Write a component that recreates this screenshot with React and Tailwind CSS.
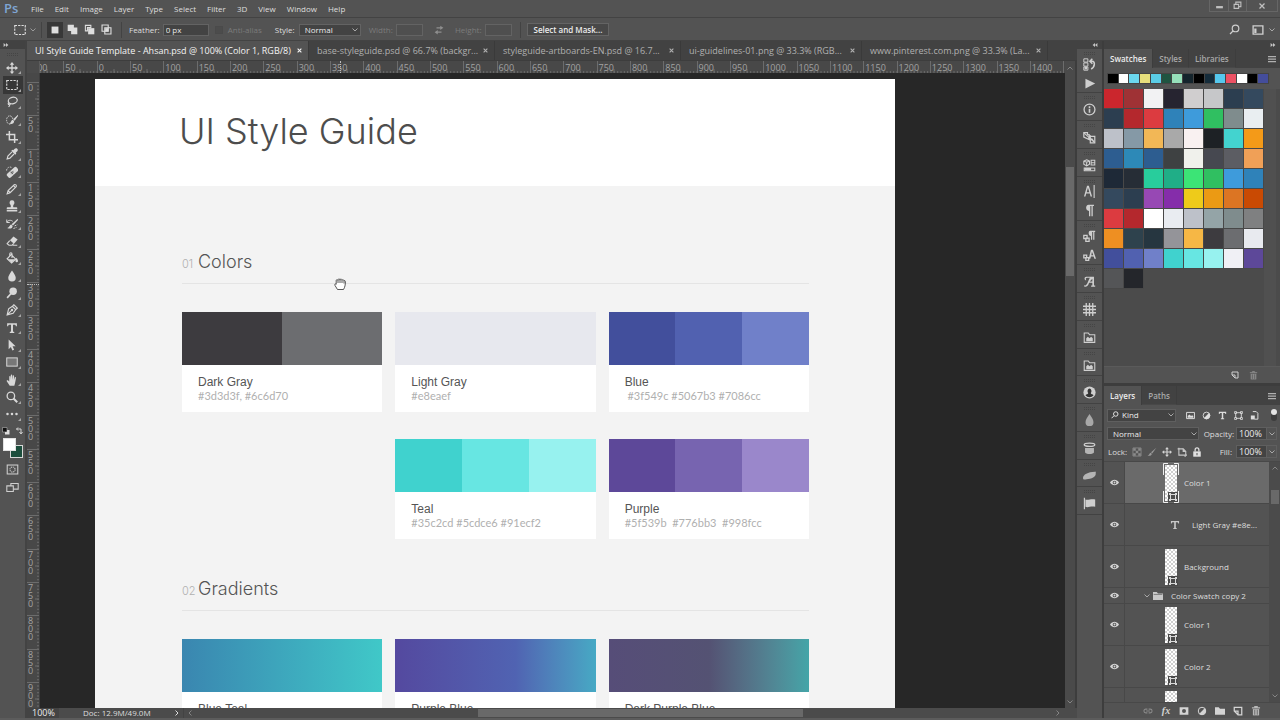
import React, { useEffect, useState } from "react";

const STROKE = { fill: "none", stroke: "currentColor", strokeWidth: 1.3 };

function Icon({ size = 14, children, className = "" }) {
  return (
    <svg
      width={size}
      height={size}
      viewBox="0 0 16 16"
      fill="currentColor"
      aria-hidden="true"
      className={`shrink-0 ${className}`}
    >
      {children}
    </svg>
  );
}

const Chevron = ({ className = "" }) => (
  <Icon size={8} className={className}>
    <path d="M3 5l5 5 5-5" {...STROKE} strokeWidth="2" />
  </Icon>
);

/* ---------- tool glyphs ---------- */

const glyphs = {
  move: <path d="M8 0l3 3.500H8.900v3.600h3.600V5L16 8l-3.500 3V8.900H8.900v3.600H11L8 16l-3-3.500h2.100V8.900H3.500V11L0 8l3.500-3v2.100h3.600V3.500H5z" />,
  marquee: <rect x="1" y="2" width="14" height="12" {...STROKE} strokeWidth="1.500" strokeDasharray="3 1.500" />,
  lasso: (
    <>
      <ellipse cx="9" cy="6" rx="6" ry="4.300" transform="rotate(-14 9 6)" {...STROKE} strokeWidth="1.600" />
      <path d="M4 8.600c-1.600 1-1.400 3 .4 3 1.700 0 1.800-2 .2-2M5.200 11c0 1.600-.6 2.500-1.800 3.500" {...STROKE} strokeWidth="1.500" />
    </>
  ),
  quick: (
    <>
      <ellipse cx="5" cy="8" rx="4.200" ry="5.500" {...STROKE} strokeDasharray="2 1.300" />
      <path d="M16 1L9.500 7l2 2 4.500-6.500zM8.800 7.800c-2.300.8-1.500 4-4.600 4.900 3.300 1.500 6.800.2 6.600-2.900z" />
    </>
  ),
  crop: <path d="M4.500 0v11.500H16M0 4.500h11.500V16" {...STROKE} strokeWidth="2" />,
  dropper: (
    <>
      <path d="M15 1c-1.300-1.300-2.900-.6-3.700.3L9.600 3l-1-.8-1.500 1.500 5.200 5.200 1.500-1.500-.8-1 1.700-1.700C15.600 3.900 16.300 2.300 15 1z" />
      <path d="M8 5.300L2.500 10.800 1.500 14.500l3.700-1L10.700 8" {...STROKE} strokeWidth="1.500" />
    </>
  ),
  heal: (
    <>
      <path d="M.8 6a4.500 4.500 0 0 1 7-3.800" {...STROKE} strokeDasharray="2 1.300" />
      <rect x="0" y="5.500" width="17" height="7" rx="2.500" transform="rotate(-42 8 8.500)" />
      <path d="M6 9l4-2M7 11l3-3M6.500 7.500l3 3.500" stroke="#535353" strokeWidth="1" />
    </>
  ),
  pencil: <path d="M1.500 14.500l1.300-4.500L11 2.300c1.500-1 3.600 1 2.600 2.600L5.500 13zM2.800 10l2.700 3M10 3.500l2.700 2.700" {...STROKE} strokeWidth="1.500" />,
  stamp: <path d="M8 .5A3.200 3.200 0 0 0 5.700 6c.9 1.200.9 2.500.5 3.500H2c-.6 0-1 .4-1 1V12.300h14v-1.800c0-.6-.4-1-1-1H9.800c-.4-1-.4-2.300.5-3.500A3.200 3.200 0 0 0 8 .5zM1 13.300h14v1.900H1z" />,
  history: (
    <>
      <path d="M1 5.500C3 2.500 7 2.500 9 4.500M1 2v4h4" {...STROKE} />
      <path d="M15.500 1L7.500 8.300 9.300 10 16 2.500zM6.900 8.500c-2.300.8-2 3.900-5.400 4.700 3.300 1.900 7.600.6 7.300-2.600z" />
      <path d="M10 14l4-1.500M11.500 10.500L15 9" {...STROKE} strokeDasharray="2 1" />
    </>
  ),
  eraser: (
    <>
      <path d="M10 2l5.500 4-4.800 5.500-5.500-4.500z" />
      <path d="M5 7.500l-3.500 4 2.500 2.200h4l2.300-2.500M9 13.700h6" {...STROKE} strokeWidth="1.500" />
    </>
  ),
  bucket: (
    <>
      <path d="M7 3.500l6 6-5.500 5L1.500 9zM5 6V2.500c0-2 3-2 3 0V8" {...STROKE} strokeWidth="1.500" />
      <path d="M3 9.500h9.500l-5 4.500zM14 7.500c1.500 2 2 3.500 2 4.500a1.700 1.700 0 0 1-3.400 0c0-1 .4-2.500 1.400-4.500z" />
    </>
  ),
  drop: <path d="M8 .5c2.500 4 5 6.800 5 9.700a5 5 0 0 1-10 0C3 7.300 5.500 4.500 8 .5z" />,
  dodge: (
    <>
      <circle cx="9.500" cy="5.500" r="5" />
      <path d="M6.500 9L1.500 14.500" {...STROKE} strokeWidth="2.200" />
    </>
  ),
  pen: (
    <>
      <path d="M1.500 14.500l2-8 5-3.500 4.500 4.500L9.500 12.500zM1.500 14.500l6-6M9 2.500l1.500-1.500 4.500 4.500-1.500 1.500" {...STROKE} strokeWidth="1.500" />
      <circle cx="8" cy="8" r="1.600" />
    </>
  ),
  type: <path d="M1.500 1.500h13V5.500h-1.300c-.3-1.600-.8-2-2-2H9.300v8.500c0 .9.5 1.200 1.700 1.200v1.300H5v-1.300c1.200 0 1.700-.3 1.700-1.200V3.500H4.800c-1.200 0-1.700.4-2 2H1.500z" />,
  arrow: <path d="M3.500 0.500v13l3-2.800 2 4.600 2.300-1-2-4.500h4z" />,
  rect: <rect x="1" y="2.500" width="14" height="11" fill="#777" stroke="currentColor" strokeWidth="1.300" />,
  hand: <path d="M5 15.500L1 9.700c-.5-1.200 1-1.900 1.900-1L4.300 10V3.500c0-1.300 1.700-1.300 1.800 0l.3 4V1.800c0-1.300 1.800-1.300 1.900 0l.2 5.700.6-5c.1-1.200 1.800-1 1.700.2l-.2 5.300 1-3.300c.3-1 1.900-.7 1.700.4-.4 3-.6 4.700-1.300 7.200l-.9 3.200z" />,
  zoom: (
    <>
      <circle cx="6.500" cy="6.500" r="5" {...STROKE} strokeWidth="1.700" />
      <path d="M10 10l5 5" {...STROKE} strokeWidth="2.500" />
    </>
  ),
  dots: (
    <>
      <circle cx="2" cy="8" r="1.700" />
      <circle cx="8" cy="8" r="1.700" />
      <circle cx="14" cy="8" r="1.700" />
    </>
  ),
};

const tools = [
  ["Move", "move"],
  ["Rectangular Marquee", "marquee"],
  ["Lasso", "lasso"],
  ["Quick Selection", "quick"],
  ["Crop", "crop"],
  ["Eyedropper", "dropper"],
  ["Healing Brush", "heal"],
  ["Pencil", "pencil"],
  ["Clone Stamp", "stamp"],
  ["History Brush", "history"],
  ["Eraser", "eraser"],
  ["Paint Bucket", "bucket"],
  ["Blur", "drop"],
  ["Dodge", "dodge"],
  ["Pen", "pen"],
  ["Type", "type"],
  ["Path Selection", "arrow"],
  ["Rectangle", "rect"],
  ["Hand", "hand"],
  ["Zoom", "zoom"],
  ["Edit Toolbar", "dots"],
];

function Grip() {
  return (
    <svg width="12" height="3" viewBox="0 0 12 3" aria-hidden="true" className="shrink-0 text-[#454545]">
      <path d="M0 .5h12M0 2.500h12" stroke="currentColor" strokeDasharray="1 1" />
    </svg>
  );
}

function Collapse({ left = false }) {
  return (
    <svg width="6" height="4" viewBox="0 0 6 5" fill="#c4c4c4" aria-hidden="true">
      {left ? <path d="M3 0v5L0 2.500zM6 0v5L3 2.500z" /> : <path d="M0 0v5l3-2.500zM3 0v5l3-2.500z" />}
    </svg>
  );
}

/* ---------- menu and options bars ---------- */

const menus = ["File", "Edit", "Image", "Layer", "Type", "Select", "Filter", "3D", "View", "Window", "Help"];

function MenuBar() {
  return (
    <header className="flex h-[18px] shrink-0 items-stretch border-b border-[#434343] pl-1">
      <span className="flex w-[22px] items-center text-[13px] leading-none font-semibold text-[#7fa6d3]">Ps</span>
      <nav className="flex items-center gap-px" aria-label="Main menu">
        {menus.map((m) => (
          <button key={m} type="button" className="px-[5px]">
            {m}
          </button>
        ))}
      </nav>
      <div className="mr-[2px] ml-auto flex h-3 border border-t-0 border-[#666] text-[#c0c0c0]">
        <button type="button" aria-label="Minimize" className="flex w-[19px] items-center justify-center border-r border-[#666]">
          <Icon size={9}>
            <path d="M2 9h12v4H2z" />
          </Icon>
        </button>
        <button type="button" aria-label="Restore" className="flex w-[18px] items-center justify-center border-r border-[#666]">
          <Icon size={9}>
            <path d="M5 5V2h9v8h-3M2 6h8v7H2z" {...STROKE} strokeWidth="2" />
          </Icon>
        </button>
        <button type="button" aria-label="Close" className="flex w-[30px] items-center justify-center">
          <Icon size={8}>
            <path d="M3 3l10 10M13 3L3 13" {...STROKE} strokeWidth="2.500" />
          </Icon>
        </button>
      </div>
    </header>
  );
}

const Divider = ({ className = "" }) => <span className={`h-4 w-px shrink-0 bg-[#434343] ${className}`} />;

function SizeField({ label }) {
  return (
    <label className="flex items-center gap-[3px] text-[#7b7b7b]">
      {label}
      <input disabled className="h-3 w-[27px] border border-[#636363] bg-[#4f4f4f]" />
    </label>
  );
}

function OptionsBar() {
  return (
    <div className="flex h-[23px] shrink-0 items-center border-b border-[#434343] pt-px">
      <button type="button" aria-label="Tool preset" className="ml-[14px] flex items-center gap-[3px]">
        <Icon size={12}>{glyphs.marquee}</Icon>
        <Chevron className="text-[#9a9a9a]" />
      </button>
      <Divider className="ml-1" />
      <div className="ml-[5px] flex items-center">
        <button type="button" aria-label="New selection" className="flex h-4 w-4 items-center justify-center bg-[#383838]">
          <Icon size={10}>
            <path d="M2.500 2.500h11v11h-11z" />
          </Icon>
        </button>
        <button type="button" aria-label="Add to selection" className="flex h-4 w-[18px] items-center justify-center">
          <Icon size={11}>
            <path d="M1 1h9v4h5v10H6v-5H1z" />
          </Icon>
        </button>
        <button type="button" aria-label="Subtract from selection" className="flex h-4 w-4 items-center justify-center">
          <Icon size={11}>
            <path d="M2 2h8v3H5v5H2z" {...STROKE} strokeWidth="1.500" />
            <path d="M6 6h9v9H6z" />
          </Icon>
        </button>
        <button type="button" aria-label="Intersect with selection" className="flex h-4 w-[18px] items-center justify-center">
          <Icon size={11}>
            <path d="M1.500 1.500h9v9h-9zM5.500 5.500h9v9h-9z" {...STROKE} strokeWidth="1.600" />
            <path d="M6 6h5v5H6z" />
          </Icon>
        </button>
      </div>
      <Divider className="ml-[6px]" />
      <label className="ml-[7px] flex items-center gap-[3px]">
        Feather:
        <input defaultValue="0 px" className="h-3 w-[46px] border border-[#636363] bg-[#434343] px-[2px] text-[#e8e8e8]" />
      </label>
      <label className="ml-[6px] flex items-center gap-[5px] text-[#7b7b7b]">
        <input type="checkbox" disabled className="h-2 w-2 appearance-none border border-[#4a4a4a] bg-[#4c4c4c]" />
        Anti-alias
      </label>
      <label className="ml-[13px] flex items-center gap-1">
        Style:
        <span className="grid items-center">
          <select className="col-start-1 row-start-1 h-3 w-[62px] appearance-none border border-[#636363] bg-[#434343] px-[5px] leading-[10px] text-[#ececec]">
            <option>Normal</option>
          </select>
          <Chevron className="pointer-events-none col-start-1 row-start-1 mr-[2px] justify-self-end text-[#a8a8a8]" />
        </span>
      </label>
      <div className="ml-2 flex items-center">
        <SizeField label="Width:" />
        <button type="button" aria-label="Swap width and height" className="mx-[11px] text-[#8f8f8f]">
          <Icon size={10}>
            <path d="M10 1l5 3.500L10 8V5.500H4v-2h6zM6 8L1 11.500 6 15v-2.500h6v-2H6z" />
          </Icon>
        </button>
        <SizeField label="Height:" />
      </div>
      <Divider className="ml-2" />
      <button type="button" className="ml-[6px] h-[13px] border border-[#646464] bg-[#484848] px-[6px] leading-none font-semibold text-[#ececec]">
        Select and Mask...
      </button>
      <div className="mr-1 ml-auto flex items-center text-[#cfcfcf]">
        <button type="button" aria-label="Search">
          <Icon size={11}>
            <circle cx="9.500" cy="6.500" r="4.800" {...STROKE} strokeWidth="1.700" />
            <path d="M6 10l-4.500 4.500" {...STROKE} strokeWidth="2" />
          </Icon>
        </button>
        <button type="button" aria-label="Workspace" className="ml-3 flex items-center gap-1">
          <Icon size={12}>
            <path d="M1.500 2.500h13v11h-13z" {...STROKE} strokeWidth="1.800" />
            <path d="M3 6h3v6H3z" />
          </Icon>
          <Chevron className="text-[#a8a8a8]" />
        </button>
      </div>
    </div>
  );
}

/* ---------- toolbar ---------- */

function Toolbar() {
  return (
    <aside className="flex w-[27px] shrink-0 flex-col border-r-2 border-[#434343]" aria-label="Tools">
      <div className="flex h-2 shrink-0 items-center bg-[#424242] pl-[3px]">
        <Collapse />
      </div>
      <div className="flex h-[10px] shrink-0 items-center justify-center">
        <Grip />
      </div>
      <div className="flex h-[364px] shrink-0 flex-col">
        {tools.map(([name, glyph]) => (
          <div key={name} className="flex min-h-0 flex-1 pr-[2px] pl-[3px]">
            <button
              type="button"
              aria-label={name}
              className={`flex w-full items-center justify-center text-[#d8d8d8] ${glyph === "marquee" ? "bg-[#373737]" : ""}`}
            >
              <Icon size={12}>{glyphs[glyph]}</Icon>
              <svg width="3" height="3" viewBox="0 0 3 3" className="mb-[2px] self-end text-[#a5a5a5]" aria-hidden="true">
                <path d="M3 0v3H0z" fill="currentColor" />
              </svg>
            </button>
          </div>
        ))}
      </div>
      <div className="flex h-[15px] shrink-0 items-center justify-between px-[2px]">
        <Icon size={8}>
          <path d="M6 6h9v9H6z" fill="#ddd" />
          <path d="M1 1h9v9H1z" fill="#111" stroke="#ccc" />
        </Icon>
        <Icon size={8} className="text-[#d4d4d4]">
          <path d="M3 4h9v9M6 1L3 4l3 3M9 10l3 4 3-4" {...STROKE} strokeWidth="2" />
        </Icon>
      </div>
      <div className="grid h-5 w-5 shrink-0 grid-cols-3 grid-rows-3 pl-[1px]">
        <button type="button" aria-label="Background color" className="col-span-2 col-start-2 row-span-2 row-start-2 -mr-[3px] ml-[3px] border border-[#d8d8d8] bg-[#1c4e3d]" />
        <button type="button" aria-label="Foreground color" className="col-span-2 col-start-1 row-span-2 row-start-1 -mr-[2px] ml-[2px] border border-[#e2e2e2] bg-white" />
      </div>
      <button type="button" aria-label="Quick mask" className="mt-[2px] flex h-[18px] shrink-0 items-center justify-center text-[#cfcfcf]">
        <Icon size={13}>
          <rect x="1.500" y="2.500" width="13" height="11" {...STROKE} />
          <circle cx="8" cy="8" r="3.200" {...STROKE} strokeDasharray="1.500 1" />
        </Icon>
      </button>
      <button type="button" aria-label="Screen mode" className="flex h-[18px] shrink-0 items-center justify-center text-[#cfcfcf]">
        <Icon size={13}>
          <path d="M6 3h9v7H6z" {...STROKE} />
          <path d="M1 6h8v7H1z" fill="#535353" stroke="currentColor" strokeWidth="1.300" />
        </Icon>
      </button>
    </aside>
  );
}

/* ---------- document ---------- */

const tabs = [
  ["UI Style Guide Template - Ahsan.psd @ 100% (Color 1, RGB/8)", "w-[282px]"],
  ["base-styleguide.psd @ 66.7% (backgr...", "w-[186px]"],
  ["styleguide-artboards-EN.psd @ 16.7...", "w-[186px]"],
  ["ui-guidelines-01.png @ 33.3% (RGB...", "w-[181px]"],
  ["www.pinterest.com.png @ 33.3% (La...", "w-[186px]"],
];

function DocumentTabs() {
  return (
    <div className="flex h-5 shrink-0 border-b border-[#3d3d3d] bg-[#424242]" role="tablist">
      {tabs.map(([name, width], i) => (
        <div
          key={name}
          className={`flex shrink-0 items-center justify-between border-r border-[#3a3a3a] pr-[6px] pl-2 text-[9px] font-medium whitespace-nowrap ${width} ${
            i === 0 ? "bg-[#535353] text-[#f4f4f4]" : "text-[#b0b0b0]"
          }`}
        >
          <button type="button" role="tab" aria-selected={i === 0}>
            {name}
          </button>
          <button type="button" aria-label={`Close ${name}`}>
            <Icon size={5}>
              <path d="M2 2l12 12M14 2L2 14" {...STROKE} strokeWidth="3.500" />
            </Icon>
          </button>
        </div>
      ))}
    </div>
  );
}

const STEP = 100 / 3;

function useWindowSize() {
  const [size, setSize] = useState([window.innerWidth, window.innerHeight]);
  useEffect(() => {
    const update = () => setSize([window.innerWidth, window.innerHeight]);
    window.addEventListener("resize", update);
    return () => window.removeEventListener("resize", update);
  }, []);
  return size;
}

function RulerTop() {
  const [width] = useWindowSize();
  const count = Math.ceil((width - 245) / STEP);
  return (
    <div className="-ml-[10px] flex h-3 text-[9px] leading-[14px] text-[#a3a3a3]">
      {Array.from({ length: count }, (_, i) => (
        <div key={i} className="grid h-3 shrink-0" style={{ width: STEP }}>
          <svg width="34" height="12" className="col-start-1 row-start-1 text-[#6c6c6c]" aria-hidden="true">
            <path d="M.5 0V12" stroke="currentColor" />
            <path d="M3.500 11H34" stroke="currentColor" strokeWidth="2" strokeDasharray="1 2.333" />
            <path d="M17 8V12" stroke="currentColor" />
          </svg>
          {i < count - 1 && <span className="col-start-1 row-start-1 pl-[2px]">{Math.abs((i - 2) * 50)}</span>}
        </div>
      ))}
    </div>
  );
}

function RulerSide() {
  const [, height] = useWindowSize();
  const count = Math.ceil((height - 92) / STEP);
  return (
    <div className="mt-[9px] w-3 text-[9px] text-[#a3a3a3]">
      {Array.from({ length: count }, (_, i) => (
        <div key={i} className="grid" style={{ height: STEP }}>
          <svg width="12" height="34" className="col-start-1 row-start-1 text-[#6c6c6c]" aria-hidden="true">
            <path d="M0 .5H12" stroke="currentColor" />
            <path d="M11 3.500V34" stroke="currentColor" strokeWidth="2" strokeDasharray="1 2.333" />
            <path d="M8 17H12" stroke="currentColor" />
          </svg>
          <span className="col-start-1 row-start-1 ml-px w-[6px] pt-[2px] leading-2 break-all">{i * 50}</span>
        </div>
      ))}
    </div>
  );
}

const colorCards = [
  { name: "Dark Gray", hex: "#3d3d3f, #6c6d70", fills: ["bg-[#3d3b3f]", "bg-[#6c6d70]"] },
  { name: "Light Gray", hex: "#e8eaef", fills: ["bg-[#e7e8ee]"] },
  { name: "Blue", hex: " #3f549c #5067b3 #7086cc", fills: ["bg-[#424f9c]", "bg-[#5161b0]", "bg-[#7080c9]"] },
  { name: "Teal", hex: "#35c2cd #5cdce6 #91ecf2", fills: ["bg-[#40d2ce]", "bg-[#67e6e2]", "bg-[#97f2ef]"], place: "col-start-2" },
  { name: "Purple", hex: "#5f539b  #776bb3  #998fcc", fills: ["bg-[#5d4899]", "bg-[#7764b0]", "bg-[#9a87cb]"] },
];

const gradientCards = [
  { name: "Blue Teal", fills: ["bg-linear-to-r from-[#3a86b0] to-[#40c8c8]"] },
  { name: "Purple Blue", fills: ["bg-linear-to-r from-[#54499f] via-[#5063b2] via-60% to-[#46a9c4]"] },
  { name: "Dark Purple Blue", fills: ["bg-linear-to-r from-[#564d78] via-[#545273] via-50% to-[#44a5a8]"] },
];

function Card({ name, hex, fills, place = "" }) {
  return (
    <article className={`flex h-[100px] flex-col bg-white ${place}`}>
      <div className="flex h-[53px] shrink-0">
        {fills.map((f) => (
          <div key={f} className={`flex-1 ${f}`} />
        ))}
      </div>
      <h3 className="mt-[9px] ml-4 font-['Liberation_Sans',sans-serif] text-[12px] leading-4 text-[#555]">{name}</h3>
      {hex && <p className="ml-4 font-['Lato',sans-serif] text-[11px] leading-[11px] whitespace-pre text-[#b0b0b0]">{hex}</p>}
    </article>
  );
}

function Section({ number, title, cards, className = "" }) {
  return (
    <section className={`mr-[86px] ml-[87px] ${className}`}>
      <div className="flex h-[35px] items-baseline border-b border-[#e4e4e4] font-['Inter',sans-serif]">
        <span className="w-4 text-[11px] leading-[26px] font-light text-[#b0b0b0]">{number}</span>
        <h2 className="text-[18px] leading-[26px] font-light text-[#555]">{title}</h2>
      </div>
      <div className="mt-7 grid grid-cols-3 gap-x-[13px] gap-y-[27px]">
        {cards.map((c) => (
          <Card key={c.name} {...c} />
        ))}
      </div>
    </section>
  );
}

function StyleGuide() {
  return (
    <main className="mt-[6px] ml-[55px] w-[800px] shrink-0 bg-[#f3f3f3]">
      <div className="flex h-[107px] items-center bg-white pb-[3px] pl-[84px]">
        <h1 className="font-['Inter',sans-serif] text-[36px] leading-none font-light text-[#4d4d4d]">UI Style Guide</h1>
      </div>
      <Section number="01" title="Colors" cards={colorCards} className="pt-[63px]" />
      <Section number="02" title="Gradients" cards={gradientCards} className="pt-[37px]" />
    </main>
  );
}

function GrabCursor() {
  return (
    <svg width="12" height="13" viewBox="0 0 12 13" aria-hidden="true" className="absolute top-[204px] left-[294px]">
      <path
        d="M3.500 12.500L1 8.500c-.8-1.200.3-2 1.200-1.200V3.500c0-1 1.500-1.200 1.800 0 0-2 1.800-2.200 2-.4.2-1.600 1.900-1.300 2 .3.300-1.200 1.800-.8 2 .4.800-.5 1.500 0 1.400 1C11.300 8 11 10 9.500 12.500zM4 3.500V6M6 3v3M8 3.500V6M10 4v2.500"
        fill="#fff"
        stroke="#444"
        strokeWidth="0.900"
      />
    </svg>
  );
}

function DocumentArea() {
  return (
    <div className="flex min-w-0 flex-1 flex-col">
      <DocumentTabs />
      <div className="grid min-h-0 flex-1 grid-cols-[13px_1fr_12px] grid-rows-[12px_1fr]">
        <div className="border-r border-[#5c5c5c] bg-[#4b4b4b]" />
        <div className="relative min-w-0 overflow-hidden bg-[#484848]">
          <RulerTop />
          <span className="absolute top-0 left-[300px] h-3 border-l border-dotted border-[#bdbdbd]" />
        </div>
        <div className="row-span-2 flex flex-col items-center border-r-2 border-[#3d3d3d] bg-[#4a4a4a] text-[#858585]">
          <Chevron className="mt-[3px] rotate-180" />
          <div className="mt-[95px] mb-auto h-[109px] w-2 bg-[#696969]" />
          <Chevron className="mb-[2px]" />
        </div>
        <div className="relative min-h-0 overflow-hidden border-r border-[#3d3d3d] bg-[#484848]">
          <RulerSide />
          <span className="absolute top-[211px] left-0 w-3 border-t border-dotted border-[#bdbdbd]" />
        </div>
        <div className="relative min-h-0 min-w-0 overflow-hidden bg-[#272727]">
          <StyleGuide />
          <GrabCursor />
        </div>
      </div>
      <footer className="flex h-[10px] shrink-0 items-center bg-[#4b4b4b]">
        <span className="flex h-full w-8 items-center bg-[#434343] pl-[5px] text-[9px] text-[#ececec]">100%</span>
        <span className="ml-6">Doc: 12.9M/49.0M</span>
        <button type="button" aria-label="Status options" className="ml-[22px]">
          <Chevron className="-rotate-90" />
        </button>
        <Divider className="ml-[2px]" />
        <Chevron className="ml-[2px] rotate-90 text-[#858585]" />
        <div className="grid flex-1 grid-cols-[285fr_325fr_251fr]">
          <div className="col-start-2 h-2 bg-[#696969]" />
        </div>
        <Chevron className="mr-[15px] -rotate-90 text-[#858585]" />
      </footer>
    </div>
  );
}

/* ---------- collapsed panel dock ---------- */

const folder = (
  <>
    <path d="M1.500 2.500h5l1.500 2h6.500v9.500h-13z" {...STROKE} />
    <path d="M4 12.500V9l2-2 2 2 2-2 2 2v3.500z" />
  </>
);

const dock = [
  [
    ["History", <><path d="M1 1h5v4H1zM1 6h5v4H1zM1 11h5v4H1z" fill="none" stroke="currentColor" strokeWidth="1.200" /><path d="M2 11h3v3H2z" /><path d="M9 4h2.500c3.500 0 3.500 7-1.500 9.500M11.500 1L8.500 4l3 3" {...STROKE} strokeWidth="1.900" /></>],
    ["Actions", <path d="M3 2l12 6-12 6z" />],
  ],
  [["Info", <><circle cx="8" cy="8" r="6.700" {...STROKE} strokeWidth="1.600" /><path d="M7 7h2v5H7zM7 4h2v2H7z" /></>]],
  [["Clone Source", <><path d="M1 2h4.500v2l2 1v5.500L1 7.500zM9 6.500h5.500v8H9z" {...STROKE} strokeWidth="1.500" /><path d="M1.500 2.500L14 14M7 4l3 3M10.500 9l3 4" {...STROKE} /></>]],
  [["Properties", <><path d="M4.500 1l3.500 1.500v4L4.500 8.500 1 6.500v-4zM4.500 4v4M1 2.500L4.500 4 8 2.500M10 1.500h4.500v6H10zM10 4.500h4.500M1.500 11h13v3.500h-13z" {...STROKE} /><path d="M2 11h8v3H2z" /></>]],
  [
    ["Character", <path d="M5 1h2.200l4 13H9.300l-1-3.500H4L3 14H1.200zM6.100 3.500L4.500 8.900h3.300zM13 0h1.400v16H13z" />],
    ["Paragraph", <path d="M7 1h6.500v1.600H12V15h-1.600V2.600H9V15H7.400V8.500C3 8.500 2.500 1 7 1z" />],
  ],
  [
    ["Paragraph Styles", <><path d="M9 1h6v1.500h-1V12h-1.500V2.500h-1.200V12H9.800V7.500C6.500 7.500 6 1 9 1z" /><path d="M1 6.500h4v4H1zM3.500 10h4v4h-4z" {...STROKE} strokeWidth="1.600" /></>],
    ["Character Styles", <><path d="M9.800 1h2.400L16 12h-2l-.9-2.800H9.800L9 12H7zM11 3.500L10.200 7.700h2.500z" /><path d="M1 7.500h3.500V11H1zM3.500 10.500H7V14H3.500z" {...STROKE} strokeWidth="1.600" /></>],
  ],
  [["Glyphs", <path d="M4 2h9.500v11h1.500v1.500h-5V13h1.500V9.500h-4C6.500 13 4.500 15 2 14.500c-1-.3-1-2 .3-1.700C5 13.500 6.500 7 8.500 3.500H5C3.500 3.500 3 5 4 6.500 1 6 1.500 2 4 2zm7.500 2.500L8.300 8h3.200z" />]],
  [["Grid", <path d="M4 0v16M8 0v16M12 0v16M0 4h16M0 8h16M0 12h16" {...STROKE} strokeWidth="1.600" />]],
  [["Library A", folder]],
  [["Library B", folder]],
  [["Profile", <><circle cx="8" cy="8" r="7.500" /><path d="M8 3a2.700 3.300 0 0 1 1.500 5.700c.2 1.300 2.500 1.500 3.500 2.800A6.500 6.500 0 0 1 3 11.500c1-1.300 3.300-1.500 3.500-2.800A2.700 3.300 0 0 1 8 3z" fill="#333" /></>]],
  [["Drop", <path d="M8 0c2.500 4 4.900 6.800 4.900 10a4.900 4.900 0 0 1-9.800 0C3.100 6.800 5.500 4 8 0z" fill="#a8a8a8" />]],
  [["Container", <><ellipse cx="8" cy="3.500" rx="6.500" ry="2" {...STROKE} strokeWidth="1.600" /><path d="M2.500 7.500h11v5c0 3-11 3-11 0z" fill="#b4b4b4" /></>]],
  [["Shape", <path d="M0 11c0-4 7-8 16-7.500-1 2 1 4.500-3 6.500-3 2-6 2-8.500 2.500S0 13.500 0 11z" fill="#b4b4b4" />]],
  [["Flag", <path d="M1 1h1.500v14H1zM3 3c3 1.500 6-1 12 0v9c-6-1-9 1.500-12 0z" />]],
];

function Dock() {
  return (
    <aside className="flex w-[27px] shrink-0 flex-col border-r-2 border-[#3d3d3d]" aria-label="Collapsed panels">
      <div className="flex h-2 shrink-0 items-center justify-end bg-[#424242] pr-1">
        <Collapse left />
      </div>
      <div className="flex h-[466px] shrink-0 flex-col">
        {dock.map((group) => (
          <div
            key={group[0][0]}
            className={`flex min-h-0 flex-col items-center border-b border-[#424242] pt-[3px] ${
              group.length === 2 ? "flex-[46_1_0px]" : "flex-[27_1_0px]"
            }`}
          >
            <Grip />
            {group.map(([name, glyph]) => (
              <button key={name} type="button" aria-label={name} className="flex w-full flex-1 items-center justify-center text-[#cfcfcf]">
                <Icon size={13}>{glyph}</Icon>
              </button>
            ))}
          </div>
        ))}
      </div>
    </aside>
  );
}

/* ---------- right panels ---------- */

function PanelTabs({ names }) {
  return (
    <div className="flex h-[19px] shrink-0 bg-[#424242] font-semibold" role="tablist">
      {names.map((n, i) => (
        <button
          key={n}
          type="button"
          role="tab"
          aria-selected={i === 0}
          className={`border-r border-[#3d3d3d] px-[6px] ${i === 0 ? "bg-[#535353] text-[#ececec]" : "border-b border-b-[#484848] pt-px text-[#a8a8a8]"}`}
        >
          {n}
        </button>
      ))}
      <button type="button" aria-label="Panel menu" className="ml-auto pr-1 text-[#b0b0b0]">
        <Icon size={8}>
          <path d="M0 2h16v2.500H0zM0 7h16v2.500H0zM0 12h16v2.500H0z" />
        </Icon>
      </button>
    </div>
  );
}

const recent = [
  "bg-black", "bg-white", "bg-[#6bd8ef]", "bg-[#e6df7c]", "bg-[#5acde6]", "bg-[#1f5441]", "bg-[#96e0ba]", "bg-[#14242c]",
  "bg-black", "bg-[#152c3b]", "bg-[#55c8ee]", "bg-[#ec5164]", "bg-white", "bg-black", "bg-[#444d9b]",
];

const swatches = [
  "bg-[#cb262d]", "bg-[#9f3235]", "bg-[#f2f2f3]", "bg-[#262430]", "bg-[#d0cecf]", "bg-[#c6c7c9]", "bg-[#2c3e50]", "bg-[#34495e]",
  "bg-[#2c3e50]", "bg-[#b4282d]", "bg-[#dc3b40]", "bg-[#2f82b9]", "bg-[#3e9bdb]", "bg-[#30bf61]", "bg-[#7f8c8d]", "bg-[#e9eef1]",
  "bg-[#bdc1c9]", "bg-[#8599a6]", "bg-[#f2b756]", "bg-[#a9a9a9]", "bg-[#f9f1f1]", "bg-[#1d2125]", "bg-[#43d3cf]", "bg-[#f49a18]",
  "bg-[#2d5d90]", "bg-[#2d89b7]", "bg-[#2d5d90]", "bg-[#3e4142]", "bg-[#f0f1ec]", "bg-[#464850]", "bg-[#5c5d63]", "bg-[#f0a057]",
  "bg-[#1e2937]", "bg-[#262d36]", "bg-[#28cd9c]", "bg-[#20ae87]", "bg-[#3ce476]", "bg-[#30bf61]", "bg-[#3e9bdb]", "bg-[#2f82b9]",
  "bg-[#34495e]", "bg-[#2c3e50]", "bg-[#9748b4]", "bg-[#852daa]", "bg-[#eecb1a]", "bg-[#eb9a14]", "bg-[#dc7523]", "bg-[#c94a03]",
  "bg-[#dc3b40]", "bg-[#b4282d]", "bg-white", "bg-[#e9ecf1]", "bg-[#bdc1c9]", "bg-[#94a4a7]", "bg-[#7f8c8d]", "bg-[#7f8081]",
  "bg-[#ee8f22]", "bg-[#2e424d]", "bg-[#263640]", "bg-[#949499]", "bg-[#f6b745]", "bg-[#3d3b3f]", "bg-[#6c6d70]", "bg-[#e8eaef]",
  "bg-[#424f9c]", "bg-[#5161b0]", "bg-[#7080c9]", "bg-[#40d2ce]", "bg-[#67e6e2]", "bg-[#97f2ef]", "bg-[#f0f0f5]", "bg-[#5d4899]",
  "bg-[#545557]", "bg-[#24262b]",
];

const pageIcon = <path d="M2 2h12v12H8L2 8zM2 8h6v6" {...STROKE} strokeWidth="2" />;
const trashIcon = (
  <>
    <path d="M1.500 3h13M6 3V1h4v2" {...STROKE} strokeWidth="1.700" />
    <path d="M3 5h10v10H3z" />
    <path d="M6 6v8M10 6v8" stroke="#535353" strokeWidth="1.200" />
  </>
);

function SwatchesPanel() {
  return (
    <section className="flex h-[334px] shrink-0 flex-col" aria-label="Swatches">
      <PanelTabs names={["Swatches", "Styles", "Libraries"]} />
      <div className="mr-2 flex h-[21px] shrink-0 items-center pl-[3px]">
        <div className="flex h-[11px] w-[162px] gap-px border border-[#444] bg-[#444]">
          {recent.map((c, i) => (
            <button key={i} type="button" aria-label={`Recent color ${i + 1}`} className={`flex-1 ${c}`} />
          ))}
        </div>
      </div>
      <div className="flex min-h-0 flex-1 bg-[#4b4b4b]">
        <div className="grid w-40 auto-rows-[20px] grid-cols-8">
          {swatches.map((c, i) => (
            <button key={i} type="button" aria-label={`Swatch ${i + 1}`} className={`border-r border-b border-[#484848] ${c}`} />
          ))}
        </div>
        <div className="w-3 bg-[#505050]" />
      </div>
      <div className="flex h-[17px] shrink-0 items-center justify-end gap-[10px] border-t border-[#5a5a5a] pr-[22px]">
        <button type="button" aria-label="New swatch" className="text-[#cfcfcf]">
          <Icon size={8}>{pageIcon}</Icon>
        </button>
        <button type="button" aria-label="Delete swatch" className="text-[#8a8a8a]">
          <Icon size={9}>{trashIcon}</Icon>
        </button>
      </div>
    </section>
  );
}

const shapeIcon = (
  <>
    <path d="M3 3h10v10H3z" {...STROKE} strokeWidth="1.600" />
    <path d="M.5 .5h4.500V5H.5zM11 .5h4.500V5H11zM.5 11h4.500v4.500H.5zM11 11h4.500v4.500H11z" />
    <path d="M2 2h1.500v1.500H2zM12.500 2H14v1.500h-1.500zM2 12.500h1.500V14H2zM12.500 12.500H14V14h-1.500z" fill="#535353" />
  </>
);
const circleHalf = (
  <>
    <circle cx="8" cy="8" r="6" {...STROKE} strokeWidth="1.600" />
    <path d="M12.300 3.700A6 6 0 0 1 3.700 12.300z" />
  </>
);

const filters = [
  ["Pixel layers", <><path d="M1 2.500h14v11H1z" {...STROKE} strokeWidth="1.700" /><path d="M3 12V9l3-3 3 3 2-1.500 2 2V12z" /></>],
  ["Adjustment layers", circleHalf],
  ["Type layers", glyphs.type],
  ["Shape layers", shapeIcon],
  ["Smart objects", <><path d="M5 1h6l3 3v10.500H8" {...STROKE} strokeWidth="1.700" /><path d="M1.500 8h7v7h-7z" /></>],
];

const locks = [
  ["Lock transparency", <><path d="M1.500 1.500h13v13h-13z" {...STROKE} /><path d="M2 2h4v4H2zM10 2h4v4h-4zM6 6h4v4H6zM2 10h4v4H2zM10 10h4v4h-4z" /></>, "text-[#8c8c8c]"],
  ["Lock pixels", <path d="M15 1L6.500 8.500l1.800 1.800zM5.800 9c-2 .6-1.500 3.500-5 4.500 3 1.500 7 .4 6.800-2.700z" />, "text-[#9a9a9a]"],
  ["Lock position", glyphs.move, "text-[#d4d4d4]"],
  ["Lock artboard", <><path d="M3 1v12h11V7l-4-4H1M13 13v3M14 13h2" {...STROKE} strokeWidth="1.700" /><path d="M9 2v6h6z" /></>, "text-[#c8c8c8]"],
  ["Lock all", <><path d="M2 7h12v8.500H2z" /><path d="M5 7V4.500c0-4 6-4 6 0V7" {...STROKE} strokeWidth="2" /><path d="M7.200 9.500h1.600v3.500H7.200z" fill="#535353" /></>, "text-[#e0e0e0]"],
];

function Percent({ label, gap }) {
  return (
    <label className={`ml-auto flex items-center ${gap}`}>
      {label}
      <span className="flex">
        <input defaultValue="100%" className="h-[13px] w-[31px] border border-[#5f5f5f] bg-[#434343] px-[2px] text-[9px] text-[#ececec]" />
        <button type="button" aria-label={`${label} slider`} className="flex h-[13px] w-[10px] items-center justify-center border border-l-0 border-[#5f5f5f] text-[#a8a8a8]">
          <Chevron />
        </button>
      </span>
    </label>
  );
}

function Thumb({ id, selected }) {
  return (
    <svg width="16" height="40" viewBox="0 0 16 40" aria-hidden="true" className="block">
      <defs>
        <pattern id={id} width="4" height="4" patternUnits="userSpaceOnUse">
          <rect width="4" height="4" fill="#fff" />
          <path d="M0 0h2v2H0zM2 2h2v2H2z" fill="#cfcfcf" />
        </pattern>
      </defs>
      <rect x="2" y="2" width="12" height="36" fill={`url(#${id})`} />
      <rect x="5" y="29" width="10" height="10" fill="#4a4a4a" />
      <path d="M7.500 31.500h5v5h-5z" fill="none" stroke="#d8d8d8" />
      <path d="M6 30h2v2H6zM12 30h2v2h-2zM6 36h2v2H6zM12 36h2v2h-2z" fill="#d8d8d8" />
      {selected && <path d="M.5 12V.5H5M11 .5h4.500V12M.5 28v11.500H5M11 39.500h4.500V28" fill="none" stroke="#f0f0f0" />}
    </svg>
  );
}

const layers = [
  { name: "Color 1", kind: "shape", selected: true },
  { name: "Light Gray #e8e...", kind: "text" },
  { name: "Background", kind: "shape" },
  { name: "Color Swatch copy 2", kind: "group" },
  { name: "Color 1", kind: "shape" },
  { name: "Color 2", kind: "shape" },
  { name: "", kind: "shape" },
];

function LayerRow({ layer, index }) {
  const { name, kind, selected } = layer;
  return (
    <li className={`flex shrink-0 border-b border-[#484848] ${kind === "group" ? "h-4" : "h-[42px]"}`}>
      <button type="button" aria-label={`Toggle ${name} visibility`} className="flex w-[21px] shrink-0 items-center justify-center border-r border-[#484848] text-[#d4d4d4]">
        <Icon size={9}>
          <path d="M0 8c4-6.500 12-6.500 16 0-4 6.500-12 6.500-16 0zm8-3.300a3.300 3.300 0 1 0 0 6.600 3.300 3.300 0 0 0 0-6.600z" fillRule="evenodd" />
          <circle cx="8" cy="8" r="1.700" />
        </Icon>
      </button>
      <div className={`flex min-w-0 flex-1 items-center ${selected ? "bg-[#6a6a6a]" : ""}`}>
        {kind === "group" && (
          <>
            <Chevron className="ml-[18px] text-[#a8a8a8]" />
            <Icon size={10} className="mr-2 ml-[2px] text-[#c8c8c8]">
              <path d="M0 1.500h6l2 2.500h8v10.500H0z" />
              <path d="M1 5.500h14" stroke="#535353" />
            </Icon>
          </>
        )}
        {kind === "shape" && (
          <span className="mr-[5px] ml-[38px]">
            <Thumb id={`checker-${index}`} selected={selected} />
          </span>
        )}
        {kind === "text" && <Icon size={10} className="mr-3 ml-[45px] text-[#c8c8c8]">{glyphs.type}</Icon>}
        <span className="whitespace-nowrap">{name}</span>
      </div>
    </li>
  );
}

const layerActions = [
  ["Link layers", <path d="M7 5H4.500a3 3 0 0 0 0 6H7M9 5h2.500a3 3 0 0 1 0 6H9M5 8h6" {...STROKE} strokeWidth="1.700" />, "text-[#8a8a8a]"],
  ["Layer style", null, "text-[#d4d4d4]"],
  ["Add mask", <path d="M1 2h14v12H1zM8 4.800a3.200 3.200 0 1 0 0 6.400 3.200 3.200 0 0 0 0-6.400z" fillRule="evenodd" />, "text-[#d4d4d4]"],
  ["New adjustment layer", circleHalf, "text-[#d4d4d4]"],
  ["New group", <path d="M0 2h6l2 2.500h8V14H0z" />, "text-[#d4d4d4]"],
  ["New layer", pageIcon, "text-[#d4d4d4]"],
  ["Delete layer", trashIcon, "text-[#b8b8b8]"],
];

function LayersPanel() {
  return (
    <section className="flex min-h-0 flex-1 flex-col border-t-[3px] border-[#3d3d3d]" aria-label="Layers">
      <PanelTabs names={["Layers", "Paths"]} />
      <div className="flex h-5 shrink-0 items-center pl-[3px]">
        <span className="grid items-center">
          <select aria-label="Filter type" className="col-start-1 row-start-1 h-[13px] w-[69px] appearance-none border border-[#5f5f5f] bg-[#434343] pl-[14px] leading-[10px] text-[#ececec]">
            <option>Kind</option>
          </select>
          <Icon size={8} className="pointer-events-none col-start-1 row-start-1 ml-1">
            <circle cx="9.500" cy="6" r="4.500" {...STROKE} strokeWidth="2" />
            <path d="M6 9.500l-5 5" {...STROKE} strokeWidth="2" />
          </Icon>
          <Chevron className="pointer-events-none col-start-1 row-start-1 mr-[1px] justify-self-end text-[#a8a8a8]" />
        </span>
        <div className="ml-[10px] flex gap-[7px]">
          {filters.map(([name, glyph]) => (
            <button key={name} type="button" aria-label={name}>
              <Icon size={9}>{glyph}</Icon>
            </button>
          ))}
        </div>
        <button type="button" aria-label="Toggle filter" className="mr-[3px] ml-auto flex h-3 w-[6px] items-start rounded-full bg-[#3d3d3d]">
          <span className="h-[6px] w-[6px] rounded-full bg-[#e4e4e4]" />
        </button>
      </div>
      <div className="flex h-[17px] shrink-0 items-center px-[3px]">
        <span className="grid items-center">
          <select aria-label="Blend mode" className="col-start-1 row-start-1 h-[13px] w-[92px] appearance-none border border-[#5f5f5f] bg-[#434343] px-[5px] leading-[10px] text-[#ececec]">
            <option>Normal</option>
          </select>
          <Chevron className="pointer-events-none col-start-1 row-start-1 mr-[1px] justify-self-end text-[#a8a8a8]" />
        </span>
        <Percent label="Opacity:" gap="gap-[2px]" />
      </div>
      <div className="flex h-[19px] shrink-0 items-center pr-[3px] pl-1">
        <span>Lock:</span>
        <div className="ml-[5px] flex gap-[5px]">
          {locks.map(([name, glyph, color]) => (
            <button key={name} type="button" aria-label={name} className={color}>
              <Icon size={10}>{glyph}</Icon>
            </button>
          ))}
        </div>
        <Percent label="Fill:" gap="gap-[4px]" />
      </div>
      <div className="flex min-h-0 flex-1 overflow-hidden border-y border-[#484848]">
        <ul className="flex min-w-0 flex-1 flex-col">
          {layers.map((layer, i) => (
            <LayerRow key={i} layer={layer} index={i} />
          ))}
        </ul>
        <div className="flex w-[11px] shrink-0 flex-col items-center bg-[#4b4b4b] text-[#858585]">
          <Chevron className="mt-[2px] rotate-180" />
          <div className="mt-[18px] mb-auto h-[14px] w-2 bg-[#696969]" />
          <Chevron className="mb-[2px]" />
        </div>
      </div>
      <div className="flex h-[15px] shrink-0 items-center justify-end gap-2 pr-[19px]">
        {layerActions.map(([name, glyph, color]) => (
          <button key={name} type="button" aria-label={name} className={color}>
            {glyph ? <Icon size={10}>{glyph}</Icon> : <span className="block w-[10px] font-['Liberation_Serif',serif] text-[10px] leading-none font-bold italic">fx</span>}
          </button>
        ))}
      </div>
    </section>
  );
}

export default function App() {
  return (
    <div className="flex h-screen flex-col overflow-hidden border-b-2 border-[#5c5c5c] bg-[#535353] font-['Open_Sans','Noto_Sans',sans-serif] text-[8px] leading-3 text-[#dedede]">
      <MenuBar />
      <OptionsBar />
      <div className="flex min-h-0 flex-1">
        <Toolbar />
        <DocumentArea />
        <Dock />
        <div className="flex w-[176px] shrink-0 flex-col">
          <div className="flex h-2 shrink-0 items-center justify-end bg-[#424242] pr-1">
            <Collapse />
          </div>
          <SwatchesPanel />
          <LayersPanel />
        </div>
      </div>
    </div>
  );
}
